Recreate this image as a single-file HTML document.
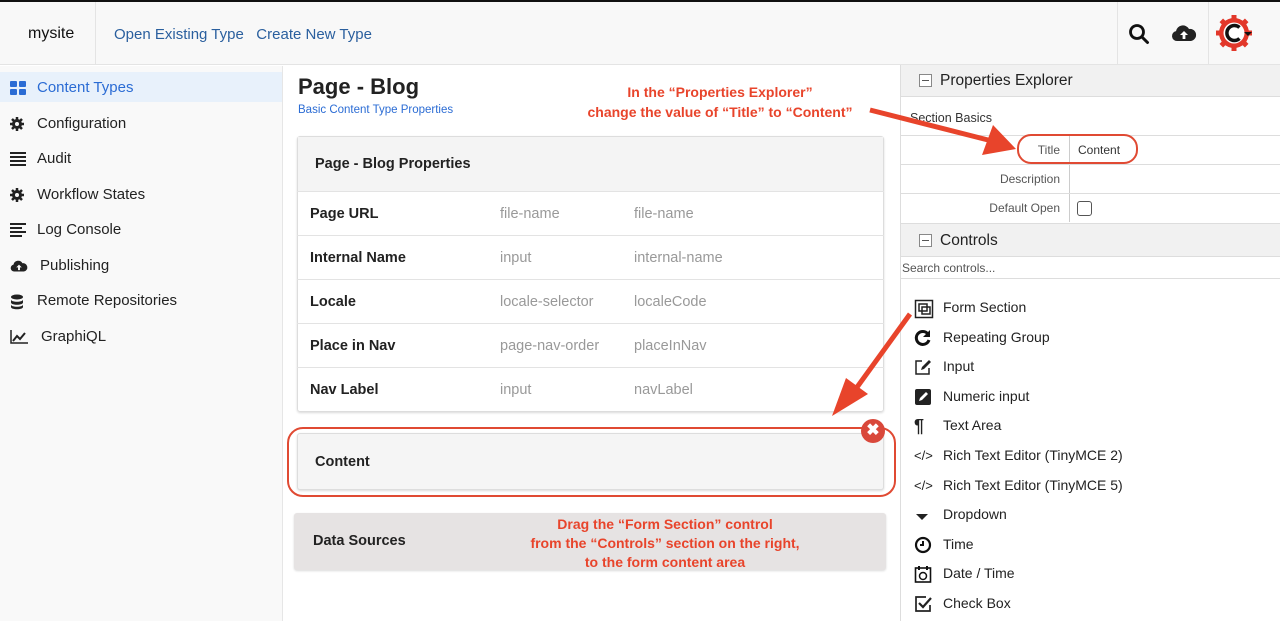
<!DOCTYPE html>
<html><head><meta charset="utf-8"><style>
*{box-sizing:border-box;margin:0;padding:0}
body{width:1280px;height:621px;overflow:hidden;background:#fff;font-family:"Liberation Sans",sans-serif;color:#222;position:relative}
.a{position:absolute}
.hdr{left:0;top:0;width:1280px;height:65px;background:#f8f8f8;border-top:2px solid #111;border-bottom:1px solid #e4e4e4}
.side{left:0;top:66px;width:283px;height:555px;background:#f9f9f9;border-right:1px solid #e6e6e6}
.si{position:absolute;left:0;width:282px;height:30px;font-size:15px;line-height:30px;padding-left:37px;color:#222}
.si svg{position:absolute;left:10px;top:8px}
.t{font-size:14.5px;white-space:nowrap}
.row{position:absolute;left:297px;width:587px;height:44px;border-top:1px solid #e3e3e3}
.row b{position:absolute;left:13px;top:14px;font-size:14.5px}
.row span{position:absolute;top:14px;font-size:14.5px;color:#999}
.pr{position:absolute;left:900px;width:380px;height:29px;border-top:1px solid #ddd;font-size:12px}
.pr .l{position:absolute;left:0;width:170px;height:28px;border-right:1px solid #ccc;text-align:right;padding-right:9px;line-height:29px;color:#555}
.ci{position:absolute;left:914px;font-size:14px;line-height:18px;color:#222}
.ci i{position:absolute;left:0;top:1px;width:18px;height:18px;font-style:normal}
.ci span{position:absolute;left:29px;white-space:nowrap}
.red{color:#e8442b;font-weight:bold;font-size:14px;text-align:center}
</style></head><body>
<div class="a hdr"></div>
<div class="a" style="left:95px;top:2px;width:1px;height:63px;background:#e4e4e4"></div>
<div class="a" style="left:1117px;top:2px;width:1px;height:63px;background:#e4e4e4"></div>
<div class="a" style="left:1208px;top:2px;width:1px;height:63px;background:#e4e4e4"></div>
<div class="a" style="left:28px;top:25px;font-size:16px;color:#111">mysite</div>
<div class="a" style="left:114px;top:26px;font-size:15px;color:#2a5f9e">Open Existing Type&nbsp;&nbsp; Create New Type</div>
<svg class="a" style="left:1128px;top:23px" width="22" height="22" viewBox="0 0 22 22"><circle cx="9" cy="9" r="6.5" fill="none" stroke="#111" stroke-width="2.8"/><path d="M14 14l5.5 5.5" stroke="#111" stroke-width="3" stroke-linecap="round"/></svg>
<svg class="a" style="left:1171px;top:23px" width="26" height="20" viewBox="0 0 26 20"><path d="M6 18a5 5 0 0 1-1-9.9A7 7 0 0 1 18 6a5.5 5.5 0 0 1 2 12z" fill="#222"/><path d="M13 8l-4 4h2.6v4h2.8v-4H17z" fill="#fff"/></svg>
<svg class="a" style="left:1214px;top:13px" width="42" height="42" viewBox="0 0 42 42"><g fill="#e2372a"><circle cx="20" cy="20" r="15"/><g stroke="#e2372a" stroke-width="5"><path d="M20 2v36M2 20h36M7.3 7.3l25.4 25.4M32.7 7.3L7.3 32.7"/></g></g><circle cx="20" cy="20" r="10.5" fill="#fff"/><path d="M25.5 14.5A7.5 7.5 0 1 0 25.5 25.5" fill="none" stroke="#111" stroke-width="3.5"/><path d="M30 19h8l-4 4z" fill="#111"/></svg>

<div class="a side"></div>
<div class="a" style="left:0;top:72px;width:282px;height:30px;background:#e8f1fb"></div>
<div class="si" style="top:73px;color:#2b6cd4"><svg width="16" height="14" viewBox="0 0 16 14"><rect x="0" y="0" width="7" height="6" rx="1" fill="#2b6cd4"/><rect x="9" y="0" width="7" height="6" rx="1" fill="#2b6cd4"/><rect x="0" y="8" width="7" height="6" rx="1" fill="#2b6cd4"/><rect x="9" y="8" width="7" height="6" rx="1" fill="#2b6cd4"/></svg>Content Types</div>
<div class="si" style="top:109px"><svg width="14" height="14" viewBox="0 0 14 14"><circle cx="7" cy="7" r="5" fill="#222"/><g stroke="#222" stroke-width="2.5"><path d="M7 0v14M0 7h14M2 2l10 10M12 2L2 12"/></g><circle cx="7" cy="7" r="2" fill="#f9f9f9"/></svg>Configuration</div>
<div class="si" style="top:144px"><svg width="16" height="14" viewBox="0 0 16 14"><path d="M0 1h16M0 5h16M0 9h16M0 13h16" stroke="#222" stroke-width="2"/></svg>Audit</div>
<div class="si" style="top:180px"><svg width="14" height="14" viewBox="0 0 14 14"><circle cx="7" cy="7" r="5" fill="#222"/><g stroke="#222" stroke-width="2.5"><path d="M7 0v14M0 7h14M2 2l10 10M12 2L2 12"/></g><circle cx="7" cy="7" r="2" fill="#f9f9f9"/></svg>Workflow States</div>
<div class="si" style="top:215px"><svg width="16" height="14" viewBox="0 0 16 14"><path d="M0 1h16M0 5h12M0 9h16M0 13h12" stroke="#222" stroke-width="2"/></svg>Log Console</div>
<div class="si" style="top:251px;padding-left:40px"><svg width="18" height="14" viewBox="0 0 26 20"><path d="M6 18a5 5 0 0 1-1-9.9A7 7 0 0 1 18 6a5.5 5.5 0 0 1 2 12z" fill="#222"/><path d="M13 8l-4 4h2.6v4h2.8v-4H17z" fill="#f9f9f9"/></svg>Publishing</div>
<div class="si" style="top:286px"><svg width="14" height="16" viewBox="0 0 14 16"><ellipse cx="7" cy="3" rx="6" ry="2.5" fill="#222"/><path d="M1 5.5c0 3 12 3 12 0v3c0 3-12 3-12 0zM1 10.5c0 3 12 3 12 0v2.5c0 3-12 3-12 0z" fill="#222"/></svg>Remote Repositories</div>
<div class="si" style="top:322px;padding-left:41px"><svg width="18" height="14" viewBox="0 0 18 14"><path d="M1 0v13h17" fill="none" stroke="#222" stroke-width="1.5"/><path d="M3 11l4-5 3 3 5-6" fill="none" stroke="#222" stroke-width="2"/></svg>GraphiQL</div>

<div class="a" style="left:298px;top:74px;font-size:22px;font-weight:bold;color:#222">Page - Blog</div>
<div class="a" style="left:298px;top:104px;font-size:11.5px;color:#2b6cd4">Basic Content Type Properties</div>

<div class="a" style="left:297px;top:136px;width:587px;height:276px;border:1px solid #ddd;border-radius:3px;box-shadow:0 1px 2px rgba(0,0,0,.15)"></div>
<div class="a" style="left:298px;top:137px;width:585px;height:54px;background:#f4f4f4"></div>
<div class="a t" style="left:315px;top:156px;font-weight:bold">Page - Blog Properties</div>
<div class="row" style="top:191px"><b>Page URL</b><span style="left:203px">file-name</span><span style="left:337px">file-name</span></div>
<div class="row" style="top:235px"><b>Internal Name</b><span style="left:203px">input</span><span style="left:337px">internal-name</span></div>
<div class="row" style="top:279px"><b>Locale</b><span style="left:203px">locale-selector</span><span style="left:337px">localeCode</span></div>
<div class="row" style="top:323px"><b>Place in Nav</b><span style="left:203px">page-nav-order</span><span style="left:337px">placeInNav</span></div>
<div class="row" style="top:367px"><b>Nav Label</b><span style="left:203px">input</span><span style="left:337px">navLabel</span></div>

<div class="a" style="left:297px;top:433px;width:587px;height:57px;background:#f5f5f5;border:1px solid #ddd;border-radius:3px;box-shadow:0 1px 2px rgba(0,0,0,.15)"></div>
<div class="a t" style="left:315px;top:454px;font-weight:bold">Content</div>
<div class="a" style="left:287px;top:427px;width:609px;height:70px;border:2px solid #e04a33;border-radius:16px"></div>
<div class="a" style="left:861px;top:419px;width:24px;height:24px;border-radius:50%;background:#d9483b;color:#fff;font-size:16px;line-height:24px;text-align:center;font-weight:bold">✖</div>

<div class="a" style="left:294px;top:513px;width:592px;height:57px;background:#e6e3e3;border-radius:3px;box-shadow:0 1px 2px rgba(0,0,0,.15)"></div>
<div class="a t" style="left:313px;top:533px;font-weight:bold">Data Sources</div>
<div class="a red" style="left:495px;top:515px;width:340px;line-height:19px">Drag the “Form Section” control<br>from the “Controls” section on the right,<br>to the form content area</div>

<div class="a red" style="left:550px;top:82px;width:340px;line-height:20px">In the “Properties Explorer”<br>change the value of “Title” to “Content”</div>

<div class="a" style="left:900px;top:65px;width:1px;height:556px;background:#ddd"></div>
<div class="a" style="left:901px;top:65px;width:379px;height:32px;background:#f1f1f1;border-bottom:1px solid #ddd"></div>
<div class="a" style="left:919px;top:74px;width:13px;height:13px;border:1px solid #888;background:#fff"><div style="position:absolute;left:2px;top:5px;width:7px;height:1px;background:#555"></div></div>
<div class="a" style="left:940px;top:72px;font-size:15.5px;color:#222">Properties Explorer</div>
<div class="a" style="left:910px;top:111px;font-size:12.5px;color:#333">Section Basics</div>
<div class="pr" style="top:135px"><div class="l">Title</div><div style="position:absolute;left:178px;top:7px;color:#333">Content</div></div>
<div class="pr" style="top:164px"><div class="l">Description</div></div>
<div class="pr" style="top:193px"><div class="l">Default Open</div><div style="position:absolute;left:177px;top:7px;width:15px;height:15px;border:1px solid #555;border-radius:3px;background:#fff"></div></div>
<div class="a" style="left:1017px;top:134px;width:121px;height:30px;border:2px solid #e04a33;border-radius:14px"></div>
<div class="a" style="left:901px;top:223px;width:379px;height:34px;background:#f1f1f1;border-top:1px solid #ddd;border-bottom:1px solid #ddd"></div>
<div class="a" style="left:919px;top:234px;width:13px;height:13px;border:1px solid #888;background:#fff"><div style="position:absolute;left:2px;top:5px;width:7px;height:1px;background:#555"></div></div>
<div class="a" style="left:940px;top:232px;font-size:15.5px;color:#222">Controls</div>
<div class="a" style="left:902px;top:261px;font-size:12px;color:#555">Search controls...</div>
<div class="a" style="left:901px;top:278px;width:379px;height:1px;background:#ddd"></div>

<div class="ci" style="top:298px"><i><svg width="20" height="20" viewBox="0 0 20 20"><rect x="1.5" y="1.5" width="17" height="17" fill="none" stroke="#222" stroke-width="1.5"/><rect x="5" y="5" width="8" height="7" fill="none" stroke="#222" stroke-width="1.5"/><rect x="8" y="8" width="8" height="7" fill="none" stroke="#222" stroke-width="1.5"/></svg></i><span>Form Section</span></div>
<div class="ci" style="top:328px"><i><svg width="18" height="18" viewBox="0 0 18 18"><path d="M14 5A6.5 6.5 0 1 0 15 11" fill="none" stroke="#111" stroke-width="3"/><path d="M16 1v7h-7z" fill="#111"/></svg></i><span>Repeating Group</span></div>
<div class="ci" style="top:357px"><i><svg width="18" height="18" viewBox="0 0 18 18"><path d="M8 3H2v13h13v-6" fill="none" stroke="#222" stroke-width="1.5"/><path d="M7 12l1-3 7-7 2 2-7 7z" fill="#222"/></svg></i><span>Input</span></div>
<div class="ci" style="top:387px"><i><svg width="18" height="18" viewBox="0 0 18 18"><rect x="1" y="1" width="16" height="16" rx="2" fill="#222"/><path d="M5 13l1-3 6-6 2 2-6 6z" fill="#fff"/></svg></i><span>Numeric input</span></div>
<div class="ci" style="top:416px"><i style="font-size:18px;font-weight:bold">¶</i><span>Text Area</span></div>
<div class="ci" style="top:446px"><i style="font-size:13px">&lt;/&gt;</i><span>Rich Text Editor (TinyMCE 2)</span></div>
<div class="ci" style="top:476px"><i style="font-size:13px">&lt;/&gt;</i><span>Rich Text Editor (TinyMCE 5)</span></div>
<div class="ci" style="top:505px"><i><svg width="18" height="18" viewBox="0 0 18 18"><path d="M2 8h12l-6 6z" fill="#222"/></svg></i><span>Dropdown</span></div>
<div class="ci" style="top:535px"><i><svg width="18" height="18" viewBox="0 0 18 18"><circle cx="9" cy="9" r="7" fill="none" stroke="#111" stroke-width="2.2"/><path d="M9 5v4H6" fill="none" stroke="#111" stroke-width="2"/></svg></i><span>Time</span></div>
<div class="ci" style="top:564px"><i><svg width="18" height="18" viewBox="0 0 18 18"><rect x="1.5" y="3" width="15" height="14" fill="none" stroke="#111" stroke-width="1.6"/><path d="M5 1v4M13 1v4" stroke="#111" stroke-width="2"/><circle cx="9" cy="11" r="3.5" fill="none" stroke="#111" stroke-width="1.5"/></svg></i><span>Date / Time</span></div>
<div class="ci" style="top:594px"><i><svg width="18" height="18" viewBox="0 0 18 18"><path d="M12 2H2v14h14v-6" fill="none" stroke="#222" stroke-width="1.7"/><path d="M5 8l4 4 8-9" fill="none" stroke="#222" stroke-width="2.2"/></svg></i><span>Check Box</span></div>

<svg class="a" style="left:0;top:0" width="1280" height="621" viewBox="0 0 1280 621">
<path d="M870 110L992 141" stroke="#e8442b" stroke-width="5"/>
<path d="M1016 149L982 155 993 125z" fill="#e8442b"/>
<path d="M910 314L855 390" stroke="#e8442b" stroke-width="5"/>
<path d="M832 416L846 378 868 394z" fill="#e8442b"/>
</svg>
</body></html>
